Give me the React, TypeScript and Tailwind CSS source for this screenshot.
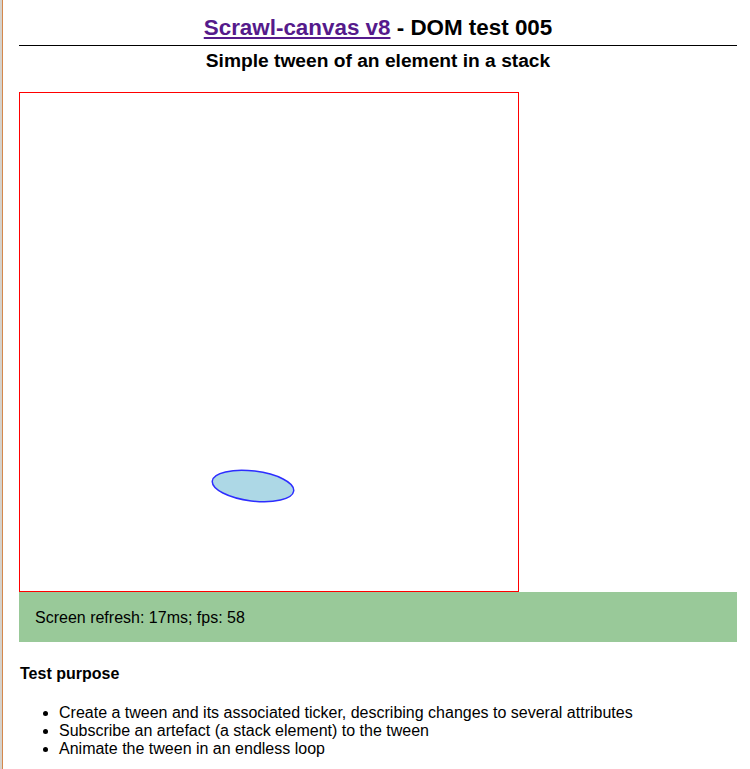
import React from "react";

const App: React.FC = () => {
  return (
    <div className="flex min-h-[769px] w-[750px] bg-white font-['Liberation_Sans',Arial,sans-serif] text-black">
      {/* edge of the neighbouring window */}
      <div className="flex shrink-0">
        <div className="w-[2px] bg-[#d6d2cc]" />
        <div className="w-[1px] bg-[#d4884c]" />
      </div>

      <div className="ml-[16px] w-[718px]">
        {/* Heading */}
        <h1 className="mt-[14px] border-b border-black pb-[3px] text-center text-[22.4px] font-bold leading-[28px]">
          <a href="#" className="text-[#551a8b] underline">
            Scrawl-canvas v8
          </a>{" "}
          - DOM test 005
        </h1>
        <h2 className="mt-[3px] text-center text-[19.2px] font-bold leading-[24px]">
          Simple tween of an element in a stack
        </h2>

        {/* Stack */}
        <div className="mt-[19px] h-[500px] w-[500px] border border-[#ff0000]">
          <svg width="498" height="498" viewBox="0 0 498 498">
            <ellipse
              cx="233"
              cy="393"
              rx="41"
              ry="15"
              transform="rotate(7 233 393)"
              fill="#add8e6"
              stroke="#2d2dff"
              strokeWidth="1.5"
            />
          </svg>
        </div>

        {/* Report */}
        <div className="bg-[#99c999] px-[16px] pb-[15px] pt-[17px] text-[16px] leading-[18px]">
          Screen refresh: 17ms; fps: 58
        </div>

        {/* Purpose */}
        <h4 className="mt-[23px] pl-[1px] text-[16px] font-bold leading-[18px]">
          Test purpose
        </h4>
        <ul className="mt-[21px] list-disc pl-[40px] text-[16px] leading-[18px]">
          <li>
            Create a tween and its associated ticker, describing changes to
            several attributes
          </li>
          <li>Subscribe an artefact (a stack element) to the tween</li>
          <li>Animate the tween in an endless loop</li>
        </ul>
      </div>
    </div>
  );
};

export default App;
